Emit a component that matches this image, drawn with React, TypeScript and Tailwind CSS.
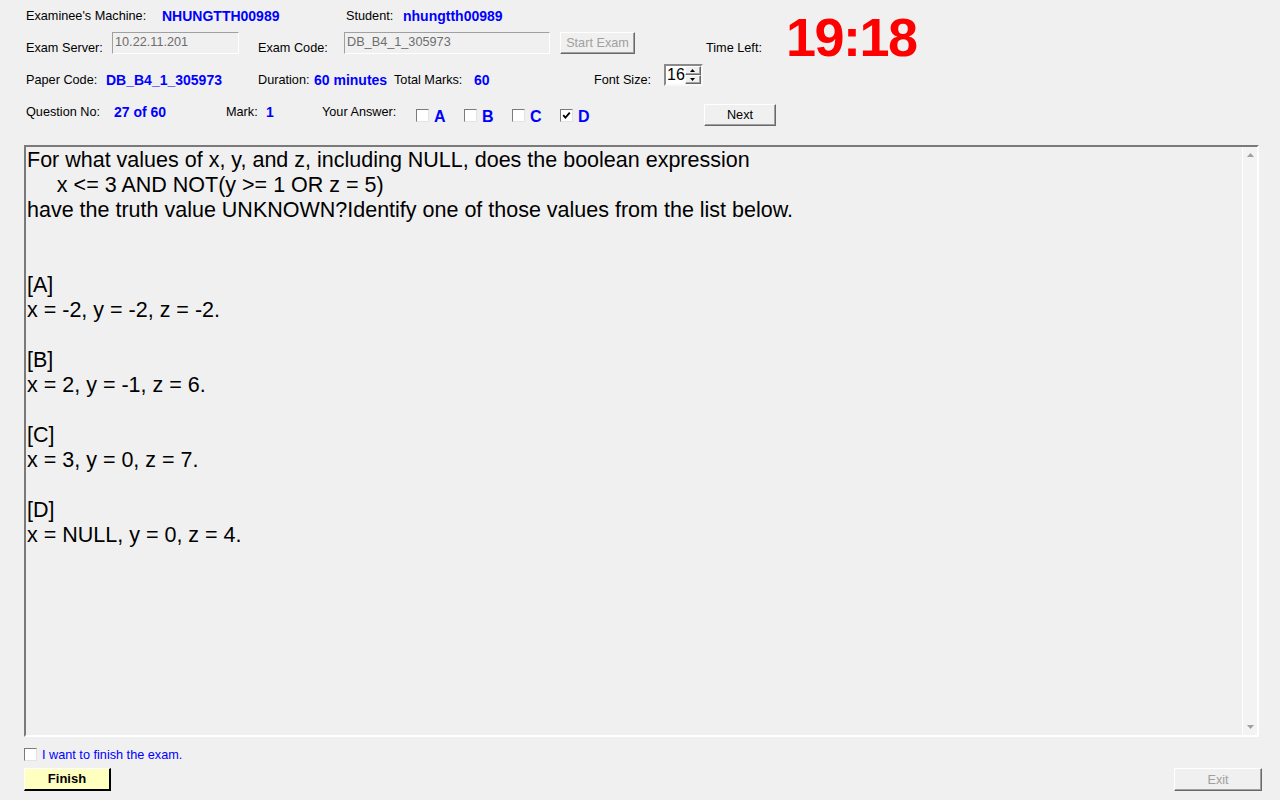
import React from 'react';

const font = "font-['Liberation_Sans',Arial,sans-serif]";

const Label = ({ w, children, className = '' }: { w: string; children: React.ReactNode; className?: string }) => (
  <span className={`${w} shrink-0 text-[12.7px] leading-[14px] text-black whitespace-nowrap ${className}`}>{children}</span>
);

const Value = ({ w, children, className = '' }: { w: string; children: React.ReactNode; className?: string }) => (
  <span className={`${w} shrink-0 text-[14px] leading-[16px] font-bold text-[#0000ff] whitespace-nowrap ${className}`}>{children}</span>
);

const CheckBox = ({ checked }: { checked?: boolean }) => (
  <span className="w-[13px] h-[13px] shrink-0 bg-white border border-t-[#7a7a7a] border-l-[#7a7a7a] border-r-[#e3e3e3] border-b-[#e3e3e3] flex items-center justify-center">
    {checked && (
      <svg width="9" height="9" viewBox="0 0 9 9">
        <path d="M1.2 4.2 L3.4 6.6 L7.8 1.6" stroke="#000" strokeWidth="1.8" fill="none" />
      </svg>
    )}
  </span>
);

const Choice = ({ letter, checked }: { letter: string; checked?: boolean }) => (
  <div className="w-[48px] shrink-0 flex items-start">
    <span className="mt-[5px]">
      <CheckBox checked={checked} />
    </span>
    <span className="ml-[5px] mt-[4px] text-[16px] leading-[18px] font-bold text-[#0000ff]">{letter}</span>
  </div>
);

const btn3d =
  'bg-[#f0f0f0] border border-t-white border-l-white border-r-[#696969] border-b-[#696969] shadow-[inset_-1px_-1px_0_#a0a0a0] flex items-center justify-center text-[12.7px] leading-[14px]';

const lines = [
  'For what values of x, y, and z, including NULL, does the boolean expression',
  '     x <= 3 AND NOT(y >= 1 OR z = 5)',
  'have the truth value UNKNOWN?Identify one of those values from the list below.',
  '',
  '',
  '[A]',
  'x = -2, y = -2, z = -2.',
  '',
  '[B]',
  'x = 2, y = -1, z = 6.',
  '',
  '[C]',
  'x = 3, y = 0, z = 7.',
  '',
  '[D]',
  'x = NULL, y = 0, z = 4.',
];

export default function App() {
  return (
    <div className={`w-[1280px] h-[800px] bg-[#f0f0f0] overflow-hidden flex flex-col ${font}`}>
      {/* header */}
      <div className="flex pl-[26px]">
        <div className="w-[760px] shrink-0 flex flex-col">
          <div className="h-[32px] flex items-center">
            <Label w="w-[136px]">Examinee's Machine:</Label>
            <Value w="w-[184px]">NHUNGTTH00989</Value>
            <Label w="w-[57px]">Student:</Label>
            <Value w="w-auto">nhungtth00989</Value>
          </div>
          <div className="h-[23px] flex items-end">
            <Label w="w-[86px]">Exam Server:</Label>
            <div className="w-[127px] h-[22px] mb-[1px] border border-t-[#a0a0a0] border-l-[#a0a0a0] border-r-white border-b-white pl-[2px] pt-[1px] text-[12.7px] leading-[16px] text-[#6d6d6d]">
              10.22.11.201
            </div>
            <Label w="w-[86px]" className="ml-[19px]">Exam Code:</Label>
            <div className="w-[206px] h-[22px] mb-[1px] border border-t-[#a0a0a0] border-l-[#a0a0a0] border-r-white border-b-white pl-[2px] pt-[1px] text-[12.7px] leading-[16px] text-[#6d6d6d]">
              DB_B4_1_305973
            </div>
            <div className={`w-[75px] h-[22px] mb-[1px] ml-[10px] ${btn3d} text-[#a0a0a0]`}>Start Exam</div>
            <Label w="w-auto" className="ml-[71px]">Time Left:</Label>
          </div>
          <div className="h-[23px] mt-[9px] flex items-end">
            <Label w="w-[80px]">Paper Code:</Label>
            <Value w="w-[152px]" className="mb-[-1px]">DB_B4_1_305973</Value>
            <Label w="w-[56px]">Duration:</Label>
            <Value w="w-[80px]" className="mb-[-1px]">60 minutes</Value>
            <Label w="w-[80px]">Total Marks:</Label>
            <Value w="w-[120px]" className="mb-[-1px]">60</Value>
            <Label w="w-[70px]">Font Size:</Label>
            <div className="w-[39px] h-[22px] mb-[1px] flex bg-white border-2 border-t-[#8a8a8a] border-l-[#8a8a8a] border-r-[#f8f8f8] border-b-[#f8f8f8]">
              <span className="flex-1 text-[16px] leading-[18px] text-black pl-[1px]">16</span>
              <div className="w-[17px] flex flex-col">
                <div className={`flex-1 ${btn3d}`}>
                  <svg width="5" height="3" viewBox="0 0 5 3"><path d="M2.5 0 L5 3 L0 3Z" fill="#000" /></svg>
                </div>
                <div className={`flex-1 ${btn3d}`}>
                  <svg width="5" height="3" viewBox="0 0 5 3"><path d="M0 0 L5 0 L2.5 3Z" fill="#000" /></svg>
                </div>
              </div>
            </div>
          </div>
          <div className="h-[22px] mt-[17px] flex items-start">
            <Label w="w-[88px]" className="mt-[1px]">Question No:</Label>
            <Value w="w-[112px]">27 of 60</Value>
            <Label w="w-[40px]" className="mt-[1px]">Mark:</Label>
            <Value w="w-[56px]">1</Value>
            <Label w="w-[94px]" className="mt-[1px]">Your Answer:</Label>
            <Choice letter="A" />
            <Choice letter="B" />
            <Choice letter="C" />
            <Choice letter="D" checked />
            <div className={`w-[72px] h-[22px] ml-[96px] ${btn3d} text-black`}>Next</div>
          </div>
        </div>
        <div className="mt-[10px] text-[54px] leading-[54px] font-bold tracking-[-1.5px] text-[#ff0000] whitespace-nowrap">19:18</div>
      </div>

      {/* question */}
      <div className="ml-[24px] mt-[19px] w-[1235px] h-[592px] flex border-2 border-t-[#7a7a7a] border-l-[#7a7a7a] border-r-white border-b-white">
        <div className="flex-1 pl-[1px] pt-[1px] text-[21.5px] leading-[25px] text-black whitespace-pre">
          {lines.map((l, i) => (
            <div key={i} className="h-[25px]">{l}</div>
          ))}
        </div>
        <div className="w-[15px] bg-[#f3f3f3] border-l border-l-white flex flex-col justify-between items-center py-[6px]">
          <svg width="7" height="4" viewBox="0 0 7 4"><path d="M3.5 0 L7 4 L0 4Z" fill="#a0a0a0" /></svg>
          <svg width="7" height="4" viewBox="0 0 7 4"><path d="M0 0 L7 0 L3.5 4Z" fill="#a0a0a0" /></svg>
        </div>
      </div>

      {/* footer */}
      <div className="ml-[24px] mt-[11px] h-[13px] flex items-center">
        <CheckBox />
        <span className="ml-[5px] text-[12.7px] leading-[14px] text-[#0000ff]">I want to finish the exam.</span>
      </div>
      <div className="mt-[7px] pl-[24px] pr-[18px] flex justify-between">
        <div className="w-[87px] h-[23px] bg-[#ffffc0] border border-t-white border-l-white border-r-2 border-b-2 border-r-black border-b-black flex items-center justify-center text-[13px] font-bold text-black">
          Finish
        </div>
        <div className={`w-[88px] h-[23px] ${btn3d} text-[#a0a0a0]`}>Exit</div>
      </div>
    </div>
  );
}
